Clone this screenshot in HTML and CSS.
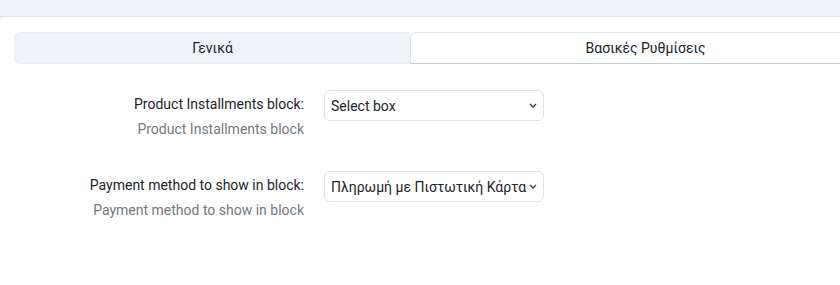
FILE: index.html
```html
<!DOCTYPE html>
<html lang="el">
<head>
    <meta charset="UTF-8">
    <meta name="viewport" content="width=device-width, initial-scale=1.0">
    <title>Ρυθμίσεις</title>
    <link rel="stylesheet" href="styles.css">
</head>
<body>

<div class="topbar"></div>

<div class="panel">
    <div class="tabs">
        <div class="tab">Γενικά</div>
        <div class="tab active">Βασικές Ρυθμίσεις</div>
    </div>

    <div class="form">
        <!-- Product Installments block -->
        <div class="form-row">
            <div class="form-label">
                <label for="block">Product Installments block:</label>
                <div class="hint">Product Installments block</div>
            </div>
            <div class="select-wrap">
                <select id="block">
                    <option>Select box</option>
                </select>
                <svg class="chevron" width="8" height="5" viewBox="0 0 8 5"><path d="M1 1l3 3 3-3" fill="none" stroke="#343a40" stroke-width="1.3"/></svg>
            </div>
        </div>

        <!-- Payment method -->
        <div class="form-row">
            <div class="form-label">
                <label for="method">Payment method to show in block:</label>
                <div class="hint">Payment method to show in block</div>
            </div>
            <div class="select-wrap">
                <select id="method">
                    <option>Πληρωμή με Πιστωτική Κάρτα</option>
                </select>
                <svg class="chevron" width="8" height="5" viewBox="0 0 8 5"><path d="M1 1l3 3 3-3" fill="none" stroke="#343a40" stroke-width="1.3"/></svg>
            </div>
        </div>
    </div>
</div>

</body>
</html>
```

FILE: styles.css
```css
html, body {
    margin: 0;
    height: 285px;
    overflow: hidden;
}
body {
    background-color: #f1f4f9;
    font-family: Roboto, "Noto Sans", sans-serif;
    font-size: 14px;
    color: #212529;
}
.topbar {
    height: 16px;
    border-bottom: 1px solid #dde3ee;
}
.panel {
    box-sizing: border-box;
    background-color: #fff;
    border-top-left-radius: 6px;
    padding: 15px 0 0 14px;
    height: 268px;
}
.tabs {
    display: flex;
    width: 826px;
    height: 32px;
}
.tab {
    box-sizing: border-box;
    flex: 0 0 396px;
    height: 32px;
    line-height: 30px;
    text-align: center;
    background-color: #eff2f7;
    border: 1px solid #e8ecf3;
    border-right: 0;
    border-radius: 6px 0 0 6px;
}
.tab.active {
    flex: 0 0 470px;
    background-color: #fff;
    border: 1px solid #dde3ee;
    border-bottom-color: #c4cbdc;
    border-right: 0;
    border-radius: 6px 0 0 0;
}
.form {
    margin-top: 26px;
}
.form-row {
    display: grid;
    grid-template-columns: 290px 220px;
    column-gap: 20px;
    align-items: start;
    margin-bottom: 32px;
}
.form-label {
    text-align: right;
    padding-top: 4px;
    line-height: 20px;
}
.form-label .hint {
    margin-top: 5px;
    color: #737a82;
}
.select-wrap {
    position: relative;
}
.select-wrap select {
    appearance: none;
    -webkit-appearance: none;
    box-sizing: border-box;
    width: 220px;
    height: 31px;
    padding: 0 16px 0 6px;
    border: 1px solid #dee3ec;
    border-radius: 6px;
    background-color: #fff;
    font-family: Roboto, "Noto Sans", sans-serif;
    font-size: 14px;
    color: #212529;
}
.chevron {
    position: absolute;
    right: 7px;
    top: 13px;
}
```
